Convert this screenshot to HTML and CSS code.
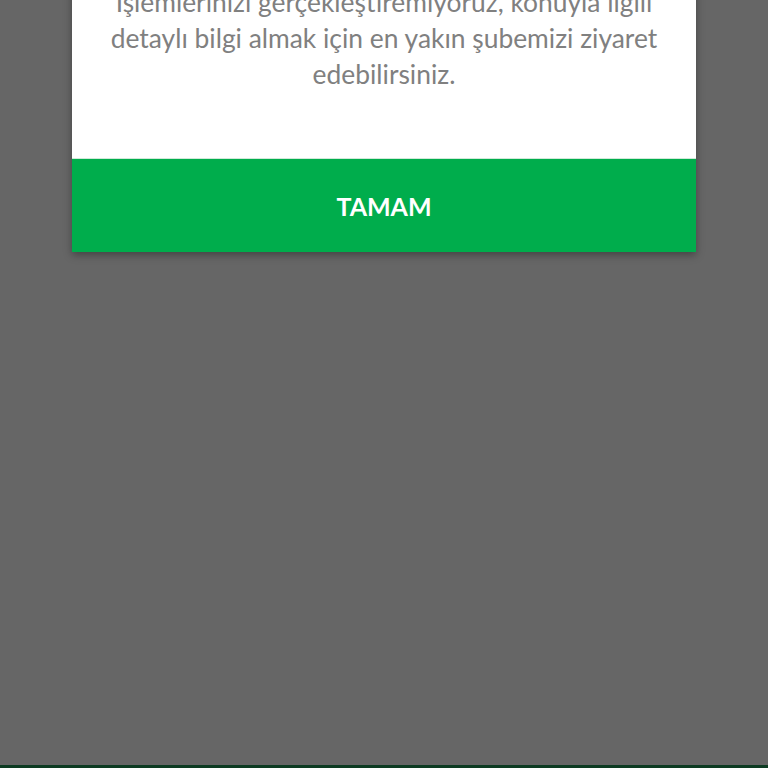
FILE: index.html
```html
<!DOCTYPE html>
<html lang="tr">
<head>
    <meta charset="UTF-8">
    <meta name="viewport" content="width=device-width, initial-scale=1.0">
    <title>Uyarı</title>
    <link rel="stylesheet" href="styles.css">
</head>
<body>
    <div class="screen">
        <div class="dialog">
            <p class="dialog-text">
                İşlemlerinizi gerçekleştiremiyoruz, konuyla ilgili
                detaylı bilgi almak için en yakın şubemizi ziyaret
                edebilirsiniz.
            </p>
            <button class="dialog-button" type="button">TAMAM</button>
        </div>
        <div class="spacer"></div>
        <div class="nav-bar"></div>
    </div>
</body>
</html>
```

FILE: styles.css
```css
body {
    margin: 0;
    background-color: #666666;
    font-family: Lato, "Open Sans", sans-serif;
}

.screen {
    display: flex;
    flex-direction: column;
    height: 100vh;
    overflow: hidden;
}

.dialog {
    width: 624px;
    margin: -40px auto 0 auto;
    background-color: #ffffff;
    box-shadow: 0 3px 8px rgba(0, 0, 0, 0.35);
}

.dialog-text {
    margin: 0;
    padding: 24px 20px 66px 20px;
    color: #808080;
    font-size: 26.4px;
    line-height: 36px;
    text-align: center;
}

.dialog-button {
    display: block;
    width: 100%;
    height: 94px;
    border: none;
    border-top: 1px solid #cfe9d8;
    background-color: #00ad4c;
    color: #ffffff;
    font-family: Lato, sans-serif;
    font-size: 25px;
    font-weight: bold;
    cursor: pointer;
}

.spacer {
    flex: 1;
}

.nav-bar {
    height: 3px;
    background-color: #0d3b22;
}
```
